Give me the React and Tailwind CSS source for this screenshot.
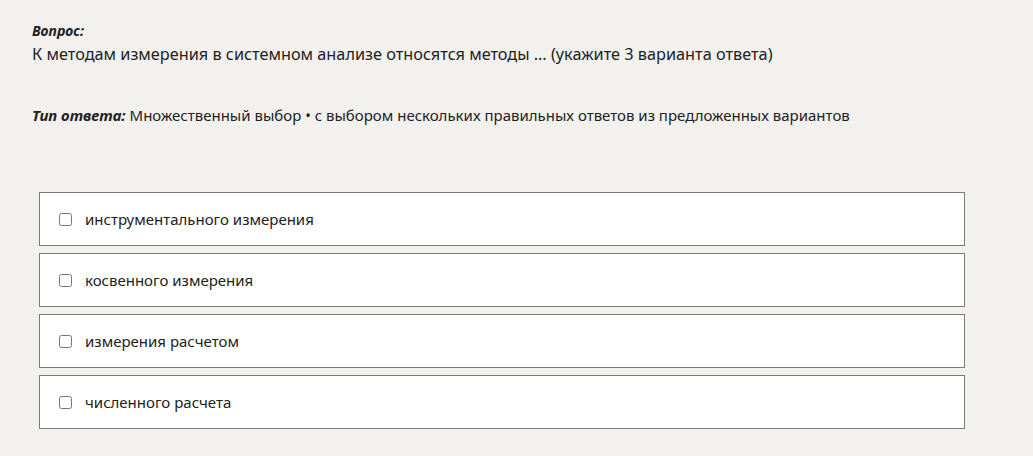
const options = [
  'инструментального измерения',
  'косвенного измерения',
  'измерения расчетом',
  'численного расчета',
]

export default function App() {
  return (
    <div
      className="min-h-[456px] bg-[#f2f1ee] text-[#222] pl-[32px] pt-[21px]"
      style={{ fontFamily: '"Noto Sans", "Open Sans", sans-serif' }}
    >
      <div className="text-[14px] leading-[20px] font-bold italic">Вопрос:</div>
      <div className="text-[16.3px] leading-[24px] mt-[1px]">
        К методам измерения в системном анализе относятся методы … (укажите 3 варианта ответа)
      </div>
      <div className="text-[15px] leading-[24px] mt-[37px]">
        <span className="font-bold italic">Тип ответа:</span> Множественный выбор • с выбором нескольких правильных ответов из предложенных вариантов
      </div>
      <div className="mt-[65px] ml-[7px] w-[926px] flex flex-col gap-[7px]">
        {options.map((o) => (
          <label
            key={o}
            className="h-[54px] bg-white border border-[#7a7a7a] flex items-center pl-[19px] text-[15px]"
          >
            <input type="checkbox" className="w-[13px] h-[13px] m-0 mr-[13px] accent-[#555]" />
            {o}
          </label>
        ))}
      </div>
    </div>
  )
}
